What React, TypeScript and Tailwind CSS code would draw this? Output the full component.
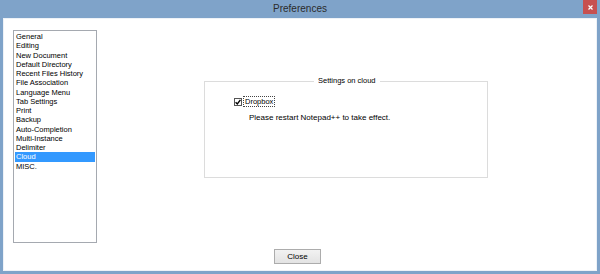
const pages = [
  "General",
  "Editing",
  "New Document",
  "Default Directory",
  "Recent Files History",
  "File Association",
  "Language Menu",
  "Tab Settings",
  "Print",
  "Backup",
  "Auto-Completion",
  "Multi-Instance",
  "Delimiter",
  "Cloud",
  "MISC.",
]

const selected = "Cloud"

function TitleBar() {
  return (
    <div className="relative flex h-[18px] shrink-0 items-center justify-center">
      <span className="text-[10px] leading-none text-[#2b2b2b]">Preferences</span>
      <button className="absolute right-[3px] top-0 flex h-[14px] w-[14px] items-center justify-center bg-[#c75050]">
        <svg width="5" height="5" viewBox="0 0 5 5">
          <path d="M0.5 0.5 L4.5 4.5 M4.5 0.5 L0.5 4.5" stroke="#fff" strokeWidth="1.2" />
        </svg>
      </button>
    </div>
  )
}

function PageList() {
  return (
    <div className="h-[213px] w-[84px] shrink-0 border border-[#a5a9b0] bg-white p-px">
      {pages.map((page) => (
        <div
          key={page}
          className={`h-[9.25px] pl-px text-[7.5px] leading-[9.25px] ${
            page === selected ? "bg-[#3399ff] text-white" : "text-black"
          }`}
        >
          {page}
        </div>
      ))}
    </div>
  )
}

function CloudSettings() {
  return (
    <div className="relative ml-[107px] mt-[51px] h-[97px] w-[284px] border border-[#dcdcdc]">
      <span className="absolute left-[109px] top-[-5px] bg-white px-[4px] text-[7.5px] leading-[8px] text-black">
        Settings on cloud
      </span>
      <div className="ml-[29px] mt-[14px] flex items-center">
        <div className="flex h-[8px] w-[8px] items-center justify-center border border-[#555] bg-white">
          <svg width="6" height="6" viewBox="0 0 6 6">
            <path d="M0.6 3.2 L2.3 4.9 L5.4 0.9" fill="none" stroke="#000" strokeWidth="1.4" />
          </svg>
        </div>
        <span className="ml-[1px] border border-dotted border-[#444] px-px text-[7.5px] leading-[9px] text-black">
          Dropbox
        </span>
      </div>
      <div className="ml-[44px] mt-[6px] text-[8px] leading-[9px] text-black">
        Please restart Notepad++ to take effect.
      </div>
    </div>
  )
}

export default function App() {
  return (
    <div className="flex h-[274px] w-[600px] flex-col bg-[#7fa3c9] [font-family:'Liberation_Sans',Arial,sans-serif]">
      <TitleBar />
      <div className="mx-[3px] mb-[3px] flex flex-1 flex-col border border-[#eef2f7] bg-white">
        <div className="flex pl-[9px] pt-[11px]">
          <PageList />
          <CloudSettings />
        </div>
        <div className="ml-[270px] mt-[6px] flex">
          <button className="h-[15px] w-[47px] border border-[#acacac] bg-gradient-to-b from-[#f2f2f2] to-[#e3e3e3] text-[8px] leading-none text-black">
            Close
          </button>
        </div>
      </div>
    </div>
  )
}
